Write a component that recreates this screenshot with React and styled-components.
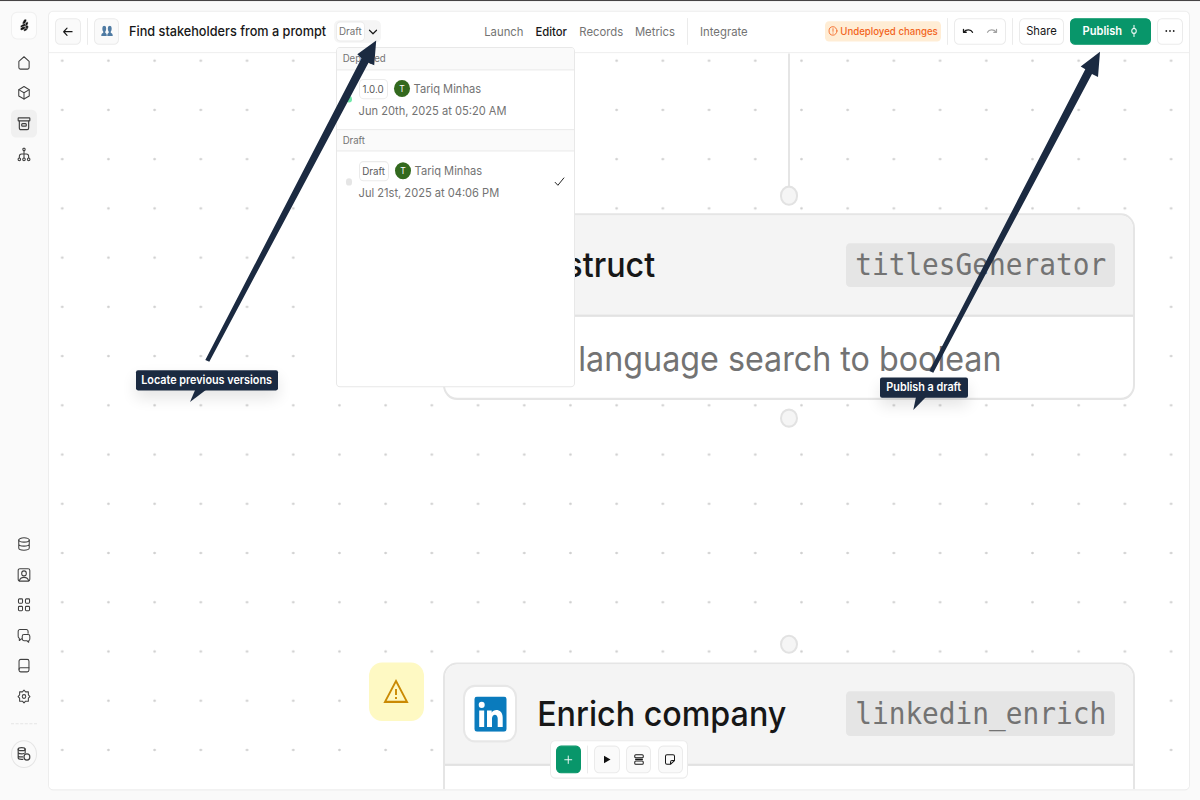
import React from 'react';
import styled, { createGlobalStyle, css } from 'styled-components';

const GlobalStyle = createGlobalStyle`
  html, body { margin: 0; padding: 0; background: #fafafa; overflow: hidden; }
  * { box-sizing: border-box; }
`;

const Viewport = styled.div`
  width: 1200px;
  height: 800px;
  overflow: hidden;
  background: #fafafa;
`;

/* The interface is laid out on a 1200x750 stage that fills the 3:2 window. */
const Stage = styled.div`
  position: relative;
  display: flex;
  width: 1200px;
  height: 750px;
  transform: scaleY(1.06667);
  transform-origin: 0 0;
  font-family: Inter, "Liberation Sans", sans-serif;
  color: #171717;
  background: #fafafa;
  border-top: 1px solid #474445;
  box-shadow: inset 0 1px 0 #fff;
  white-space: nowrap;
`;

const Svg = styled.svg`
  display: block;
  flex: none;
  fill: none;
  stroke: currentColor;
  stroke-width: ${(p) => p.$w || 1.8};
  stroke-linecap: round;
  stroke-linejoin: round;
`;

const Icon = ({ size = 14, w, children }) => (
  <Svg width={size} height={size} viewBox="0 0 24 24" $w={w}>{children}</Svg>
);

/* ---------- Sidebar ---------- */

const Sidebar = styled.nav`
  display: flex;
  flex-direction: column;
  align-items: center;
  width: 48px;
  padding: 10px 0 0;
  color: #404040;
`;

const Logo = styled.div`
  display: flex;
  align-items: center;
  justify-content: center;
  width: 26px;
  height: 26px;
  margin-bottom: 9px;
  border: 1px solid #f0f0f0;
  border-radius: 6px;
  background: #fdfdfd;
  color: #111;
`;

const NavItem = styled.div`
  display: flex;
  align-items: center;
  justify-content: center;
  width: 26px;
  height: 25.6px;
  margin-bottom: 3px;
  border-radius: 5px;
  background: ${(p) => (p.$active ? '#f0f0f0' : 'transparent')};
`;

const NavSpacer = styled.div`
  height: 336.8px;
`;

const NavRule = styled.div`
  width: 26px;
  margin: 9.6px 0 15px;
  border-top: 1px dashed #e5e5e5;
`;

const Credits = styled.div`
  display: flex;
  align-items: center;
  justify-content: center;
  width: 25.6px;
  height: 25.6px;
  border: 1.5px solid #e5e5e5;
  border-radius: 50%;
`;

/* ---------- Panel and header ---------- */

const Panel = styled.main`
  display: flex;
  flex-direction: column;
  width: 1142px;
  height: 731px;
  margin-top: 8.5px;
  border: 1px solid #ededed;
  border-radius: 5px;
  background: #fff;
  overflow: hidden;
`;

const Header = styled.header`
  display: flex;
  align-items: center;
  flex: none;
  height: 39px;
  padding: 0 6.5px 0 6.2px;
  border-bottom: 1px solid #ebebeb;
`;

const Button = styled.div`
  display: flex;
  align-items: center;
  justify-content: center;
  flex: none;
  width: ${(p) => p.$width || 25.4}px;
  height: 25.4px;
  border: 1px solid #ebebeb;
  border-radius: 5px;
  background: ${(p) => (p.$soft ? '#fafafa' : '#fff')};
  color: #171717;
  font-size: 11.2px;
  font-weight: 400;
  ${(p) => p.$primary && css`
    border-color: #08966a;
    background: #08966a;
    color: #fff;
    font-weight: 600;
  `}
`;

const PublishButton = styled(Button)`
  justify-content: flex-start;
  padding-left: 11.8px;
  font-size: 11.1px;
`;

const Divider = styled.div`
  flex: none;
  width: 1px;
  height: 25.5px;
  margin: 0 ${(p) => p.$gap || 0}px;
  background: #ebebeb;
`;

const Title = styled.h1`
  margin: 0 0 0 9.7px;
  width: 205.4px;
  font-size: 12.7px;
  font-weight: 500;
`;

const VersionPill = styled.div`
  display: flex;
  align-items: center;
  justify-content: space-between;
  width: 46.5px;
  height: 21.5px;
  padding: 0 2.6px 0 1.5px;
  border-radius: 5px;
  background: #f5f5f5;
`;

const Chip = styled.span`
  display: inline-flex;
  align-items: center;
  justify-content: center;
  width: ${(p) => p.$width}px;
  height: 18.6px;
  border: 1px solid #ebebeb;
  border-radius: 4.5px;
  background: #fff;
  color: ${(p) => (p.$dim ? '#737373' : '#5c5c5c')};
  font-size: 9.8px;
`;

const Tabs = styled.div`
  display: flex;
  align-items: center;
  margin-left: 103.3px;
`;

const Tab = styled.span`
  width: ${(p) => p.$width}px;
  font-size: 11.3px;
  color: ${(p) => (p.$active ? '#171717' : '#737373')};
  font-weight: ${(p) => (p.$active ? 500 : 400)};
`;

const LastTab = styled(Tab)`
  padding-left: 12px;
`;

const Actions = styled.div`
  display: flex;
  align-items: center;
  margin-left: auto;
  gap: 6.1px;
`;

const Warning = styled.div`
  display: flex;
  align-items: center;
  gap: 2.6px;
  width: 115.8px;
  height: 19.4px;
  padding-left: 2.6px;
  border-radius: 4px;
  background: #ffedd5;
  color: #f26522;
  font-size: 9.65px;
  font-weight: 500;
`;

const UndoGroup = styled(Button)`
  justify-content: space-around;
  padding: 0 0.5px;
`;

const Faded = styled.span`
  display: flex;
  color: #a3a3a3;
`;

const PublishIcon = styled.span`
  display: flex;
  margin-left: 6.2px;
`;

/* ---------- Canvas ---------- */

const Canvas = styled.section`
  position: relative;
  flex: 1;
  overflow: hidden;
  background-color: #fff;
  background-image: radial-gradient(circle, #cfcfcf 0.9px, transparent 1.5px);
  background-size: 46.21px 46.17px;
  background-position: -9.9px -16.2px;
`;

const Edge = styled.div`
  position: absolute;
  left: 738.6px;
  top: 0;
  width: 2.3px;
  height: 126px;
  background: #e5e5e5;
`;

const Handle = styled.div`
  position: absolute;
  left: 730.6px;
  top: ${(p) => p.$top}px;
  width: 18.6px;
  height: 18.6px;
  border: 2px solid #e2e2e2;
  border-radius: 50%;
  background: #f5f5f5;
`;

const Node = styled.article`
  position: absolute;
  left: 393.9px;
  top: ${(p) => p.$top}px;
  width: 692.6px;
  height: 175.4px;
  border: 2px solid #e5e5e5;
  border-radius: 14px;
  background: #fff;
  overflow: hidden;
`;

const NodeHeader = styled.div`
  display: flex;
  align-items: center;
  height: 95px;
  padding: 0 18.5px 0 18.6px;
  border-bottom: 2px solid #e2e2e2;
  background: #f4f4f4;
`;

const NodeIcon = styled.div`
  display: flex;
  align-items: center;
  justify-content: center;
  width: 54px;
  height: 54px;
  border: 2px solid #e7e7e7;
  border-radius: 12px;
  background: #fff;
`;

const NodeTitle = styled.h2`
  margin: 0 0 0 19.7px;
  font-size: 32.25px;
  font-weight: 500;
`;

const NodeKey = styled.code`
  display: flex;
  align-items: center;
  justify-content: center;
  width: 268.6px;
  height: 41.6px;
  margin-left: auto;
  border-radius: 4px;
  background: #e5e5e5;
  color: #737373;
  font-family: "DejaVu Sans Mono", "Liberation Mono", monospace;
  font-size: 27.8px;
`;

const NodeText = styled.p`
  display: flex;
  justify-content: flex-end;
  margin: 0;
  padding: 18.6px 132px 0 0;
  line-height: 41px;
  color: #737373;
  font-size: 32.25px;
`;

const AlertTile = styled.div`
  position: absolute;
  left: 319.6px;
  top: 571.2px;
  display: flex;
  align-items: center;
  justify-content: center;
  width: 55.3px;
  height: 55.3px;
  border-radius: 13px;
  background: #fef9c3;
  color: #ca8a04;
`;

const Toolbar = styled.div`
  position: absolute;
  left: 501px;
  top: 644.4px;
  display: flex;
  align-items: center;
  gap: 6.2px;
  width: 138.4px;
  height: 36.2px;
  padding: 0 4.6px;
  border: 1px solid #ebebeb;
  border-radius: 5px;
  background: #fff;
`;

/* ---------- Version menu ---------- */

const Menu = styled.div`
  position: absolute;
  left: 335.6px;
  top: 43px;
  width: 239.4px;
  height: 319px;
  border: 1px solid #e8e8e8;
  border-radius: 4px;
  background: #fff;
  overflow: hidden;
`;

const MenuHeading = styled.div`
  display: flex;
  align-items: center;
  height: ${(p) => p.$height}px;
  padding-left: 6.1px;
  border-bottom: 1px solid #ebebeb;
  ${(p) => p.$ruled && css`border-top: 1px solid #ebebeb;`}
  background: #fafafa;
  color: #737373;
  font-size: 9.6px;
`;

const Version = styled.div`
  display: grid;
  grid-template-columns: 22px 1fr 20px;
  align-items: center;
  height: ${(p) => p.$height}px;
  color: #737373;
`;

const Status = styled.i`
  width: 6.4px;
  height: 6.4px;
  margin-left: 9.1px;
  border-radius: 50%;
  background: ${(p) => p.$color};
`;

const VersionBody = styled.div`
  display: flex;
  flex-direction: column;
  gap: 2px;
  padding-top: 0.8px;
`;

const VersionLine = styled.div`
  display: flex;
  align-items: center;
  height: 18.6px;
  font-size: 11.1px;
`;

const Avatar = styled.span`
  display: flex;
  align-items: center;
  justify-content: center;
  width: 16px;
  height: 16px;
  margin: 0 3.5px 0 6.5px;
  border-radius: 50%;
  background: #33691e;
  color: #fff;
  font-size: 8.5px;
`;

const CheckMark = styled.span`
  color: #171717;
`;

/* ---------- Annotations ---------- */

const Arrows = styled.svg`
  position: absolute;
  left: 0;
  top: -1px;
  width: 1200px;
  height: 750px;
  fill: #1b2a41;
`;

const Callout = styled.div`
  position: absolute;
  left: ${(p) => p.$left}px;
  top: ${(p) => p.$top}px;
  display: flex;
  align-items: center;
  justify-content: center;
  width: ${(p) => p.$width}px;
  height: 19.2px;
  border-radius: 2px;
  background: #1b2a41;
  box-shadow: 0 7px 14px rgba(0, 0, 0, 0.11);
  color: #fff;
  font-size: 10.8px;
  font-weight: 600;
`;

/* ---------- Icons ---------- */

const House = () => <Icon><path d="M3.200 9.500 12 2l8.800 7.500V19.500a2.500 2.500 0 0 1-2.500 2.500H5.700a2.500 2.500 0 0 1-2.500-2.500z" /></Icon>;
const Cube = () => <Icon><path d="m12 2 9 5v10l-9 5-9-5V7z" /><path d="m3.500 7.300 8.500 4.800 8.500-4.800M12 12v10" /></Icon>;
const Archive = () => <Icon w={2}><rect x="2" y="2.500" width="20" height="5" rx="1" /><path d="M4 8v11a2.500 2.500 0 0 0 2.500 2.500h11A2.500 2.500 0 0 0 20 19V8" /><rect x="8" y="12" width="8" height="4" rx="1.500" /></Icon>;
const Tree = () => (
  <Icon>
    <circle cx="12" cy="3.500" r="2" />
    <circle cx="4" cy="19.500" r="2.200" />
    <circle cx="12" cy="19.500" r="2.200" />
    <circle cx="20" cy="19.500" r="2.200" />
    <path d="M12 5.500v12M4 17v-2a4 4 0 0 1 4-4h8a4 4 0 0 1 4 4v2" />
  </Icon>
);
const Database = () => <Icon><ellipse cx="12" cy="5.500" rx="9" ry="3.500" /><path d="M3 5.500v13c0 2 4 3.500 9 3.500s9-1.500 9-3.500v-13M3 12c0 2 4 3.500 9 3.500s9-1.500 9-3.500" /></Icon>;
const Contact = () => <Icon><rect x="2" y="2" width="20" height="20" rx="3" /><circle cx="12" cy="9.500" r="4" /><path d="M4 21.500c1-4 4-5.500 8-5.500s7 1.500 8 5.500" /></Icon>;
const Apps = () => (
  <Icon>
    <rect x="2.500" y="2.500" width="7" height="7" rx="1.500" />
    <rect x="14.500" y="2.500" width="7" height="7" rx="1.500" />
    <rect x="2.500" y="14.500" width="7" height="7" rx="1.500" />
    <rect x="14.500" y="14.500" width="7" height="7" rx="1.500" />
  </Icon>
);
const Chat = () => (
  <Icon>
    <path d="M19 8V5a3 3 0 0 0-3-3H5a3 3 0 0 0-3 3v8a3 3 0 0 0 2 3v3.500L8 17" />
    <path d="M12 10h7a3 3 0 0 1 3 3v4a3 3 0 0 1-2 3v2.500L17 20h-5a3 3 0 0 1-3-3v-4a3 3 0 0 1 3-3z" />
  </Icon>
);
const Book = () => <Icon><rect x="3.500" y="2" width="17" height="20" rx="3" /><path d="M3.500 18c0-1.500 1-2.500 2.500-2.500h14.500" /></Icon>;
const Gear = () => (
  <Icon>
    <circle cx="12" cy="12" r="3" />
    <path d="m12 1.800 2.700 2.700h4.800v4.800l2.700 2.700-2.700 2.700v4.800h-4.800L12 22.200l-2.700-2.700H4.500v-4.800L1.800 12l2.700-2.700V4.500h4.800z" />
  </Icon>
);
const Coins = () => (
  <Icon w={2}>
    <ellipse cx="8" cy="4" rx="6" ry="2.500" />
    <path d="M2 4v14c0 1.500 2.500 2.500 6 2.500h2M14 4v6M2 9c0 1.500 2.500 2.500 6 2.500 1.500 0 3 0 4-.5M2 14c0 1.500 2.500 2.500 6 2.500h2" />
    <circle cx="17" cy="16.500" r="5" />
  </Icon>
);
const Undo = () => <Icon size={12} w={2.6}><path d="M3 9v5.500h5.500" /><path d="M4 14c4-5.500 14-5.500 17 0.500" /></Icon>;
const Redo = () => <Icon size={12} w={2.4}><path d="M21 9v5.500h-5.500" /><path d="M20 14c-4-5.500-14-5.500-17 0.500" /></Icon>;
const LogoMark = () => (
  <svg width="9" height="11.500" viewBox="0 0 18 24" fill="currentColor" stroke="#fdfdfd" strokeWidth="0.700">
    <ellipse cx="9" cy="5" rx="6" ry="2.900" transform="rotate(-58 9 5)" />
    <ellipse cx="13" cy="10" rx="5.500" ry="2.600" transform="rotate(-58 13 10)" />
    <ellipse cx="6" cy="12.500" rx="6" ry="2.600" transform="rotate(-25 6 12.500)" />
    <ellipse cx="13.500" cy="16.500" rx="4.600" ry="3" transform="rotate(-60 13.500 16.500)" />
    <ellipse cx="5.500" cy="18" rx="5.500" ry="3" transform="rotate(-20 5.500 18)" />
    <ellipse cx="11" cy="20.500" rx="4" ry="2.300" transform="rotate(-25 11 20.500)" />
  </svg>
);
const People = () => (
  <svg width="12" height="10" viewBox="0 0 24 20" fill="#4f7ba3">
    <ellipse cx="6.500" cy="6" rx="3.800" ry="5.600" />
    <path d="M0.500 19.500c0-4 1.500-5 4-6V10h4v3.500c2 .8 3 2 3 6z" />
    <ellipse cx="17.500" cy="6" rx="3.800" ry="5.600" />
    <path d="M12.500 19.500c0-4 1-5.200 3-6V10h4v3.500c2.500 1 4 2 4 6z" />
  </svg>
);
const LinkedIn = () => (
  <svg width="33" height="33" viewBox="0 0 33 33">
    <rect x="0.500" width="32" height="33" rx="2.800" fill="#0a7bbd" />
    <g fill="#fff">
      <circle cx="7.700" cy="7.800" r="3" />
      <path d="M5.200 13h5v15.500h-5zM13 13h4.700v2.200c2-4 11-3.800 11 4.600v8.700h-5v-7.800c0-5-5.700-4.600-5.700 0v7.800h-5z" />
    </g>
  </svg>
);

const App = () => (
  <>
    <GlobalStyle />
    <Viewport>
      <Stage>
        <Sidebar>
          <Logo><LogoMark /></Logo>
          <NavItem><House /></NavItem>
          <NavItem><Cube /></NavItem>
          <NavItem $active><Archive /></NavItem>
          <NavItem><Tree /></NavItem>
          <NavSpacer />
          <NavItem><Database /></NavItem>
          <NavItem><Contact /></NavItem>
          <NavItem><Apps /></NavItem>
          <NavItem><Chat /></NavItem>
          <NavItem><Book /></NavItem>
          <NavItem><Gear /></NavItem>
          <NavRule />
          <Credits><Coins /></Credits>
        </Sidebar>

        <Panel>
          <Header>
            <Button $soft><Icon w={2.4} size={11.5}><path d="M21 12H4M10.500 5 3.500 12l7 7" /></Icon></Button>
            <Divider $gap={6.2} />
            <Button $soft><People /></Button>
            <Title>Find stakeholders from a prompt</Title>
            <VersionPill>
              <Chip $width={29} $dim>Draft</Chip>
              <Icon size={10} w={2.8}><path d="m3.500 8 8.500 8 8.500-8" /></Icon>
            </VersionPill>
            <Tabs>
              <Tab $width={51.2}>Launch</Tab>
              <Tab $width={43.9} $active>Editor</Tab>
              <Tab $width={55.6}>Records</Tab>
              <Tab $width={52.2}>Metrics</Tab>
              <Divider />
              <LastTab>Integrate</LastTab>
            </Tabs>
            <Actions>
              <Warning>
                <Icon size={10} w={2}><circle cx="12" cy="12" r="9.500" /><path d="M12 7v6M12 16.500v.5" /></Icon>
                Undeployed changes
              </Warning>
              <Divider />
              <UndoGroup $width={52}>
                <Undo />
                <Faded><Redo /></Faded>
              </UndoGroup>
              <Divider />
              <Button $width={44.3}>Share</Button>
              <PublishButton $width={81.3} $primary>
                Publish
                <PublishIcon><Icon size={12} w={2}><circle cx="12" cy="12" r="4.500" /><path d="M12 1.500v6M12 16.500v6" /></Icon></PublishIcon>
              </PublishButton>
              <Button>
                <svg width="10" height="4" viewBox="0 0 10 4" fill="#222">
                  <circle cx="1.300" cy="2" r="0.900" />
                  <circle cx="5" cy="2" r="0.900" />
                  <circle cx="8.700" cy="2" r="0.900" />
                </svg>
              </Button>
            </Actions>
          </Header>

          <Canvas>
            <Edge />
            <Handle $top={124.7} />
            <Node $top={150.5}>
              <NodeHeader>
                <NodeIcon />
                <NodeTitle>Instruct</NodeTitle>
                <NodeKey>titlesGenerator</NodeKey>
              </NodeHeader>
              <NodeText>Natural language search to boolean</NodeText>
            </Node>
            <Handle $top={333.2} />
            <Handle $top={545} />
            <AlertTile>
              <Svg width="26" height="24" viewBox="0 0 26 24" $w={1.9}>
                <path d="M13 2.500 24 22H2z" strokeLinejoin="miter" />
                <path d="M13 10v5.500M13 17.500v1.800" strokeLinecap="butt" />
              </Svg>
            </AlertTile>
            <Node $top={571.2}>
              <NodeHeader>
                <NodeIcon><LinkedIn /></NodeIcon>
                <NodeTitle>Enrich company</NodeTitle>
                <NodeKey>linkedin_enrich</NodeKey>
              </NodeHeader>
            </Node>
            <Toolbar>
              <Button $primary><Icon size={10.5} w={2}><path d="M12 4v16M4 12h16" /></Icon></Button>
              <Divider />
              <Button $soft><svg width="8" height="8" viewBox="0 0 8 8" fill="#111"><path d="M1 .5 7.500 4 1 7.500z" /></svg></Button>
              <Button $soft><Icon size={12} w={2}><rect x="3.500" y="3" width="17" height="6" rx="2" /><rect x="3.500" y="15" width="17" height="6" rx="2" /><path d="M5 12h14" /></Icon></Button>
              <Button $soft><Icon size={12} w={2}><path d="M21 14V6a3 3 0 0 0-3-3H6a3 3 0 0 0-3 3v12a3 3 0 0 0 3 3h7zM21 14h-5a3 3 0 0 0-3 3v4" /></Icon></Button>
            </Toolbar>
          </Canvas>
        </Panel>

        <Menu>
          <MenuHeading $height={20.6}>Deployed</MenuHeading>
          <Version $height={55.3}>
            <Status $color="#6ee7a8" />
            <VersionBody>
              <VersionLine><Chip $width={29}>1.0.0</Chip><Avatar>T</Avatar>Tariq Minhas</VersionLine>
              <VersionLine>Jun 20th, 2025 at 05:20 AM</VersionLine>
            </VersionBody>
          </Version>
          <MenuHeading $height={21} $ruled>Draft</MenuHeading>
          <Version $height={57}>
            <Status $color="#e5e5e5" />
            <VersionBody>
              <VersionLine><Chip $width={30}>Draft</Chip><Avatar>T</Avatar>Tariq Minhas</VersionLine>
              <VersionLine>Jul 21st, 2025 at 04:06 PM</VersionLine>
            </VersionBody>
            <CheckMark><Icon size={11} w={2}><path d="m2.500 13 6 6L21.500 4" /></Icon></CheckMark>
          </Version>
        </Menu>

        <Callout $left={135.5} $top={345.6} $width={142.2}>Locate previous versions</Callout>
        <Callout $left={880} $top={352.8} $width={87.5}>Publish a draft</Callout>
        <Arrows viewBox="0 0 1200 800" preserveAspectRatio="none">
          <path d="M205.300 360 361.500 58.300 357.300 54.300 376.200 40.500 374.200 65.300 368.500 62.800 209.300 361.800z" />
          <path d="M929.300 371 1085.300 69.300 1080.700 66.500 1100 51.700 1098 77 1092 74 933.300 372.800z" />
          <path d="M195.300 389.500H206.500L190 402z" />
          <path d="M916 397H926L913.300 410z" />
        </Arrows>
      </Stage>
    </Viewport>
  </>
);

export default App;
